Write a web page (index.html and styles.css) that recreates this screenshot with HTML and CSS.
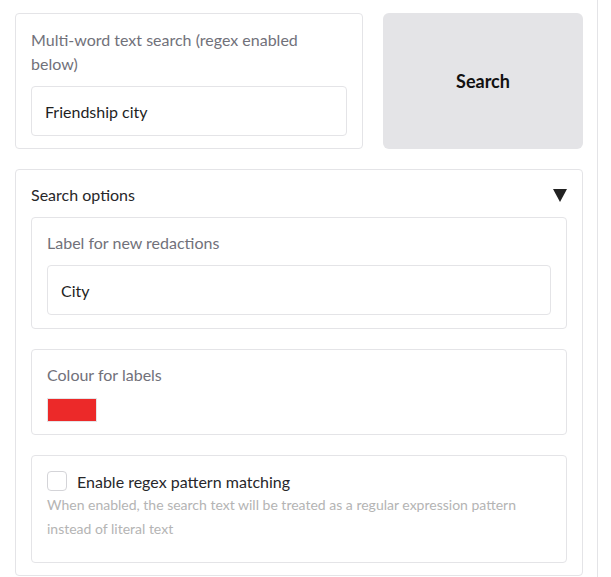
FILE: index.html
```html
<!DOCTYPE html>
<html>
<head>
<meta charset="utf-8">
<link rel="stylesheet" href="styles.css">
</head>
<body>
<div class="column">
  <div class="row">
    <div class="block text-block">
      <label class="label">Multi-word text search (regex enabled below)</label>
      <div class="input">Friendship city</div>
    </div>
    <button class="search-btn">Search</button>
  </div>
  <div class="accordion">
    <div class="acc-header">
      <span>Search options</span>
      <svg class="caret" width="14" height="13" viewBox="0 0 14 13"><polygon points="0,0 14,0 7,13" fill="#222"/></svg>
    </div>
    <div class="acc-body">
      <div class="block inner">
        <label class="label">Label for new redactions</label>
        <div class="input">City</div>
      </div>
      <div class="block inner colour-block">
        <label class="label">Colour for labels</label>
        <div class="swatch"></div>
      </div>
      <div class="block inner check-block">
        <div class="check-row">
          <span class="checkbox"></span>
          <span class="check-label">Enable regex pattern matching</span>
        </div>
        <div class="info">When enabled, the search text will be treated as a regular expression pattern instead of literal text</div>
      </div>
    </div>
  </div>
</div>
</body>
</html>
```
FILE: styles.css
```css
html, body {
  margin: 0;
  padding: 0;
  background: #ffffff;
}
body {
  font-family: "Lato", "Open Sans", sans-serif;
  font-size: 16px;
  color: #27272a;
}
.column {
  width: 598px;
  min-height: 577px;
  box-sizing: border-box;
  border-right: 1px solid #e4e4e7;
  padding: 13px 16px 0 15px;
  display: flex;
  flex-direction: column;
  gap: 20px;
}
.row {
  display: flex;
  gap: 20px;
  width: 568px;
}
.block {
  border: 1px solid #e4e4e7;
  border-radius: 4px;
  background: #fff;
  box-sizing: border-box;
}
.text-block {
  width: 348px;
  height: 136px;
  padding: 14px 15px 12px;
  display: flex;
  flex-direction: column;
}
.label {
  display: block;
  color: #71717a;
  font-size: 16px;
  line-height: 24px;
}
.input {
  margin-top: 10px;
  height: 50px;
  box-sizing: border-box;
  border: 1px solid #e4e4e7;
  border-radius: 4px;
  padding: 0 13px;
  display: flex;
  align-items: center;
  font-size: 16px;
  color: #1f1f1f;
}
.search-btn {
  flex: 1;
  height: 136px;
  border: none;
  border-radius: 6px;
  background: #e4e4e7;
  font-family: inherit;
  font-size: 18px;
  font-weight: 700;
  color: #111;
  padding: 0;
}
.accordion {
  width: 568px;
  border: 1px solid #e4e4e7;
  border-radius: 4px;
  box-sizing: border-box;
  padding: 13px 15px 12px;
}
.acc-header {
  display: flex;
  justify-content: space-between;
  align-items: center;
  height: 24px;
  line-height: 24px;
  color: #27272a;
}
.caret {
  display: block;
  margin-top: 1px;
}
.acc-body {
  margin-top: 10px;
  display: flex;
  flex-direction: column;
  gap: 20px;
}
.inner {
  width: 536px;
  padding: 13px 15px 13px;
}
.swatch {
  margin-top: 11px;
  width: 50px;
  height: 24px;
  background: #ec2929;
  border: 1px solid #e4e4e7;
  box-sizing: border-box;
}
.colour-block {
  padding-bottom: 12px;
}
.check-block {
  padding-top: 15px;
  padding-bottom: 21px;
}
.check-row {
  display: flex;
  align-items: center;
  gap: 10px;
  height: 20px;
}
.checkbox {
  width: 20px;
  height: 20px;
  box-sizing: border-box;
  border: 1px solid #d4d4d8;
  border-radius: 4px;
  background: #fff;
}
.check-label {
  color: #27272a;
  font-size: 16px;
}
.info {
  margin-top: 2px;
  font-size: 14px;
  line-height: 24px;
  color: #b4b4b4;
}
```
